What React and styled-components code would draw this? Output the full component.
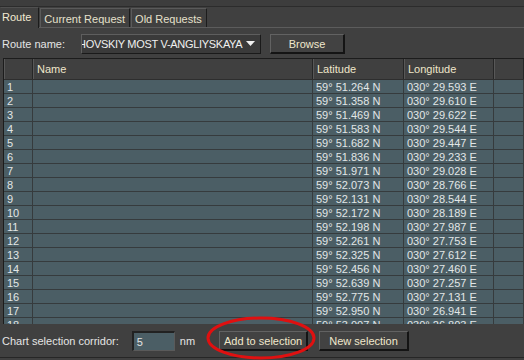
import React from "react";
import styled, { createGlobalStyle } from "styled-components";

const Global = createGlobalStyle`
  html, body { margin: 0; padding: 0; background: #404040; }
  body { font-family: "Liberation Sans", Arial, sans-serif; font-size: 11px; }
`;

const Window = styled.div`
  position: relative;
  width: 524px;
  height: 360px;
  background: #404040;
  display: flex;
  flex-direction: column;
  overflow: hidden;
  color: #dcdcdc;
`;

const TopBand = styled.div`
  height: 6px;
  background: #3d3d3d;
  border-bottom: 1px solid #2c2c2c;
`;

const TabStrip = styled.div`
  display: flex;
  align-items: flex-end;
  height: 20px;
  border-bottom: 1px solid #5c5c5c;
`;

const Tab = styled.div`
  box-sizing: border-box;
  height: ${(p) => (p.$active ? "21px" : "19px")};
  margin-bottom: ${(p) => (p.$active ? "-1px" : "0")};
  padding: ${(p) => (p.$active ? "3px 7px 0 1px" : "4px 4px 0 3px")};
  background: #404040;
  color: ${(p) => (p.$active ? "#f2ead2" : "#e6e0cc")};
  border-top: 1px solid ${(p) => (p.$active ? "#505050" : "#5a5a5a")};
  border-left: 1px solid ${(p) => (p.$active ? "transparent" : "#5a5a5a")};
  border-right: 1px solid #1c1c1c;
  margin-right: 1px;
  white-space: nowrap;
  font-size: 11px;
`;

const FormRow = styled.div`
  display: flex;
  align-items: center;
  height: 20px;
  margin-top: 6px;
  padding-left: 2px;
`;

const Label = styled.span`
  color: #e4e4e4;
  white-space: nowrap;
`;

const Combo = styled.div`
  box-sizing: border-box;
  display: flex;
  align-items: center;
  width: 180px;
  height: 20px;
  margin-left: 16px;
  background: #3a3a3a;
  border-top: 1px solid #5e5e5e;
  border-left: 1px solid #5e5e5e;
  border-right: 1px solid #1a1a1a;
  border-bottom: 1px solid #1a1a1a;
`;

const ComboText = styled.div`
  flex: 1;
  overflow: hidden;
  white-space: nowrap;
  color: #f0f0f0;
  padding-left: 1px;
  text-indent: -5px;
  letter-spacing: -0.3px;
`;

const Arrow = styled.svg`
  width: 9px;
  height: 6px;
  margin: 0 5px 0 3px;
  flex: none;
`;

const Button = styled.button`
  box-sizing: border-box;
  height: 20px;
  width: ${(p) => p.$w}px;
  margin-left: ${(p) => p.$ml || 0}px;
  padding: 0;
  background: #424242;
  color: #f0e8cc;
  font-family: "Liberation Sans", Arial, sans-serif;
  font-size: 11px;
  border-top: 1px solid #626262;
  border-left: 1px solid #626262;
  border-right: 2px solid #141414;
  border-bottom: 2px solid #141414;
  white-space: nowrap;
`;

const Table = styled.div`
  box-sizing: border-box;
  margin: 4px 0 0 3px;
  height: 266px;
  border-top: 1px solid #1c1c1c;
  border-left: 1px solid #1c1c1c;
  overflow: hidden;
`;

const COLS = "29px 280px 91px 90px 1fr";

const HeaderRow = styled.div`
  display: grid;
  grid-template-columns: ${COLS};
  height: 20px;
  border-bottom: 1px solid #2e2e2e;
`;

const HeaderCell = styled.div`
  box-sizing: border-box;
  background: #404040;
  border-left: 1px solid #585858;
  border-right: 1px solid #262626;
  color: #efe6ca;
  padding: 4px 0 0 3px;
  white-space: nowrap;
`;

const Row = styled.div`
  display: grid;
  grid-template-columns: ${COLS};
  height: 14px;
`;

const Cell = styled.div`
  box-sizing: border-box;
  background: #4b5e65;
  border-right: 1px solid #363b3d;
  border-bottom: 1px solid #363b3d;
  color: #e2e6e7;
  padding-left: ${(p) => p.$pl || 3}px;
  line-height: 14px;
  white-space: nowrap;
  overflow: hidden;
`;

const Bottom = styled.div`
  display: flex;
  align-items: center;
  height: 20px;
  margin-top: 7px;
  padding-left: 2px;
`;

const NumInput = styled.div`
  box-sizing: border-box;
  width: 43px;
  height: 20px;
  margin-left: 13px;
  background: #4b5e65;
  border-top: 2px solid #222;
  border-left: 2px solid #222;
  border-right: 1px solid #5a5a5a;
  border-bottom: 1px solid #5a5a5a;
  color: #e4e4e4;
  padding: 3px 0 0 3px;
`;

const Unit = styled.span`
  margin-left: 5px;
  color: #e4e4e4;
`;

const BottomLine = styled.div`
  margin-top: 6px;
  height: 1px;
  background: #262626;
`;

const Highlight = styled.svg`
  position: absolute;
  left: 205px;
  top: 314px;
  width: 112px;
  height: 46px;
  pointer-events: none;
`;

const data = [
  ["59° 51.264 N", "030° 29.593 E"],
  ["59° 51.358 N", "030° 29.610 E"],
  ["59° 51.469 N", "030° 29.622 E"],
  ["59° 51.583 N", "030° 29.544 E"],
  ["59° 51.682 N", "030° 29.447 E"],
  ["59° 51.836 N", "030° 29.233 E"],
  ["59° 51.971 N", "030° 29.028 E"],
  ["59° 52.073 N", "030° 28.766 E"],
  ["59° 52.131 N", "030° 28.544 E"],
  ["59° 52.172 N", "030° 28.189 E"],
  ["59° 52.198 N", "030° 27.987 E"],
  ["59° 52.261 N", "030° 27.753 E"],
  ["59° 52.325 N", "030° 27.612 E"],
  ["59° 52.456 N", "030° 27.460 E"],
  ["59° 52.639 N", "030° 27.257 E"],
  ["59° 52.775 N", "030° 27.131 E"],
  ["59° 52.950 N", "030° 26.941 E"],
  ["59° 53.007 N", "030° 26.803 E"],
];

export default function App() {
  return (
    <Window>
      <Global />
      <TopBand />
      <TabStrip>
        <Tab $active>Route</Tab>
        <Tab>Current Request</Tab>
        <Tab>Old Requests</Tab>
      </TabStrip>
      <FormRow>
        <Label>Route name:</Label>
        <Combo>
          <ComboText>HOVSKIY MOST V-ANGLIYSKAYA NAB</ComboText>
          <Arrow viewBox="0 0 9 6">
            <path d="M0 0 H9 L4.5 5 Z" fill="#f0f0f0" />
          </Arrow>
        </Combo>
        <Button $w={75} $ml={9}>Browse</Button>
      </FormRow>
      <Table>
        <HeaderRow>
          <HeaderCell />
          <HeaderCell>Name</HeaderCell>
          <HeaderCell>Latitude</HeaderCell>
          <HeaderCell>Longitude</HeaderCell>
          <HeaderCell />
        </HeaderRow>
        {data.map((d, i) => (
          <Row key={i}>
            <Cell $pl={3}>{i + 1}</Cell>
            <Cell />
            <Cell>{d[0]}</Cell>
            <Cell>{d[1]}</Cell>
            <Cell />
          </Row>
        ))}
      </Table>
      <Bottom>
        <Label>Chart selection corridor:</Label>
        <NumInput>5</NumInput>
        <Unit>nm</Unit>
        <Button $w={89} $ml={24}>Add to selection</Button>
        <Button $w={90} $ml={11}>New selection</Button>
      </Bottom>
      <BottomLine />
      <Highlight viewBox="0 0 112 46">
        <ellipse cx="56" cy="24" rx="53" ry="20" fill="none" stroke="#e01010" strokeWidth="3" />
      </Highlight>
    </Window>
  );
}
